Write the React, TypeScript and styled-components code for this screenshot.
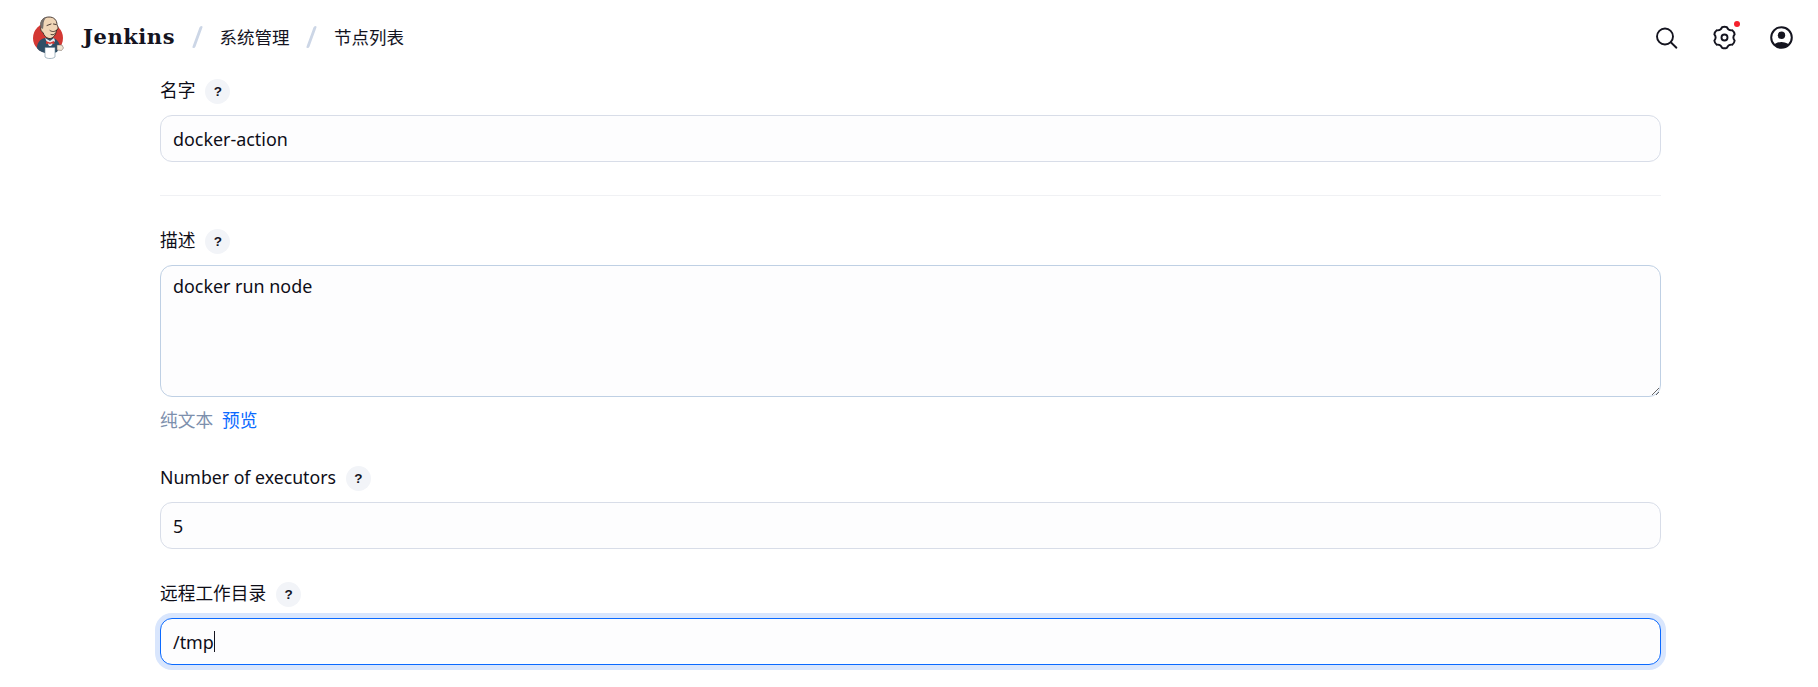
import React from "react";
import styled, { createGlobalStyle } from "styled-components";

const Global = createGlobalStyle`
  html, body { margin: 0; padding: 0; background: #fff; overflow: hidden; }
  body { font-family: "Noto Sans", "Noto Sans CJK SC", sans-serif; color: #14141f; }
`;

const Page = styled.div`
  width: 1818px;
  height: 687px;
  overflow: hidden;
`;

const Header = styled.header`
  height: 79px;
  display: flex;
  align-items: center;
  justify-content: space-between;
  padding: 0 24px 5px 32px;
  box-sizing: border-box;
`;

const Breadcrumbs = styled.nav`
  display: flex;
  align-items: center;
`;

const LogoLink = styled.a`
  display: flex;
  align-items: center;
  gap: 19px;
`;

const Brand = styled.span`
  margin-top: -2px;
  font-family: "DejaVu Serif", "Liberation Serif", serif;
  font-weight: 700;
  font-size: 21px;
  letter-spacing: 0.55px;
  color: #14141f;
`;

const Slash = styled.span`
  width: 2.5px;
  height: 22px;
  margin: 0 21.5px 0 20.5px;
  border-radius: 2px;
  background: #ccd6e6;
  transform: skewX(-20deg);
`;

const Crumb = styled.span`
  margin-top: -2px;
  font-family: "Noto Sans CJK SC", sans-serif;
  font-size: 17.5px;
  color: #14141f;
`;

const Actions = styled.div`
  display: flex;
  align-items: center;
  gap: 32px;
`;

const ActionIcon = styled.span<{ $nudge?: number }>`
  position: relative;
  width: 25px;
  height: 25px;
  margin-right: ${(p) => p.$nudge ?? 0}px;
  display: flex;
  align-items: center;
  justify-content: center;
  color: #14141f;
`;

const Dot = styled.span`
  position: absolute;
  top: -4px;
  right: -3px;
  width: 6px;
  height: 6px;
  border-radius: 50%;
  background: #f5222d;
`;

const Form = styled.main`
  width: 1501px;
  margin-left: 160px;
  display: flex;
  flex-direction: column;
`;

const Field = styled.div<{ $gap?: number }>`
  margin-bottom: ${(p) => p.$gap ?? 0}px;
`;

const LabelRow = styled.div`
  display: flex;
  align-items: center;
  gap: 10px;
  height: 25px;
  margin-bottom: 11px;
`;

const Label = styled.label`
  font-size: 17.7px;
  line-height: 25px;
  margin-top: -2px;
  font-family: "Noto Sans", "Noto Sans CJK SC", sans-serif;
  color: #0e0e18;
`;

const Help = styled.span`
  width: 25px;
  height: 25px;
  border-radius: 50%;
  background: #f2f4f8;
  display: flex;
  align-items: center;
  justify-content: center;
  font-family: "Liberation Sans", sans-serif;
  font-weight: 700;
  font-size: 13.5px;
  color: #14141f;
`;

const TextInput = styled.input`
  display: block;
  width: 100%;
  height: 47px;
  box-sizing: border-box;
  padding: 0 12px;
  border: 1.5px solid #d8dde8;
  border-radius: 12px;
  background: #fdfdfe;
  font: 17.9px "Noto Sans", sans-serif;
  color: #0e0e18;
  outline: none;
`;

const TextArea = styled.textarea`
  display: block;
  width: 100%;
  height: 132px;
  box-sizing: border-box;
  padding: 8px 12px;
  border: 1.5px solid #bfd0e4;
  border-radius: 12px;
  background: #fdfdfe;
  font: 17.9px "Noto Sans", sans-serif;
  color: #0e0e18;
  outline: none;
  resize: vertical;
`;

const FocusedInput = styled.div`
  display: flex;
  align-items: center;
  height: 47px;
  box-sizing: border-box;
  padding: 0 12px;
  border: 1.5px solid #0b6aff;
  border-radius: 12px;
  background: #fdfdfe;
  box-shadow: 0 0 0 5px #d9e6fd;
  font-size: 17.9px;
  color: #0e0e18;
`;

const Caret = styled.span`
  width: 1px;
  height: 21px;
  margin-left: 0;
  background: #14141f;
`;

const Divider = styled.hr`
  border: 0;
  height: 1px;
  background: #f0f1f4;
  margin: 33px 0 33px;
`;

const EditorTabs = styled.div`
  display: flex;
  gap: 9px;
  margin-top: 9px;
  font-family: "Noto Sans CJK SC", sans-serif;
  font-size: 17.7px;
  line-height: 26px;
`;

const EditorTab = styled.a<{ $active?: boolean }>`
  color: ${(p) => (p.$active ? "#0b6aff" : "#7d90ad")};
`;

const JenkinsLogo = () => (
  <svg width="32" height="46" viewBox="0 0 32 46" aria-hidden="true">
    <circle cx="16" cy="24" r="15" fill="#d33833" />
    <path d="M5 34c0-5 3-9 8-10h8c4 1 6 4 7 8l-3 6-3 1v-5H13v5l-3-1c-2-1-4-2-5-4z" fill="#2f4f66" />
    <path d="M13 24l5 3 4-3 1 3-4 5h-2z" fill="#e9eef2" />
    <path d="M14 27l4 1.500 4-1.500 .5 3-3.500-.5-1 1-1-1-3 .5z" fill="#d33833" />
    <path d="M9 12C8 6 12 3 17 3c5 0 8 3 8 8 1 1 1.500 3 .5 4.500l-1 .5c-.5 5-3.500 9-7.500 8.500-3-.5-5-3-6-6-2-.5-3-4-2-6z" fill="#f0d6b7" stroke="#3a2a24" strokeWidth="0.9" />
    <path d="M9 14C7 8 10 4 15 3c-3 2-3.500 5-3.500 8l-.5 4z" fill="#77706c" />
    <path d="M15 11.500l4-1.500M21.500 10l2.500.5M18 16.500c2 1.500 4.500 1.500 7-.5M19 20.500c1.500.5 3 .5 4-1" fill="none" stroke="#3a2a24" strokeWidth="0.9" strokeLinecap="round" />
    <path d="M13 33.500h10V43c-2 2-8 2-10 0z" fill="#fff" stroke="#6f8a9a" strokeWidth="0.6" />
    <path d="M25 31l5 0 1.500 3-2 2.500-4.500-.5z" fill="#f0e4d2" stroke="#6b5b50" strokeWidth="0.5" />
  </svg>
);

const SearchIcon = () => (
  <svg width="25" height="25" viewBox="0 0 25 25" fill="none" stroke="currentColor" strokeWidth="1.9" strokeLinecap="round" aria-hidden="true">
    <circle cx="11" cy="11.500" r="8" />
    <path d="M16.800 17.300L22.400 22.700" />
  </svg>
);

const gearPath = (() => {
  const pt = (r: number, deg: number) => {
    const t = (deg * Math.PI) / 180;
    return `${(12.5 + r * Math.cos(t)).toFixed(2)} ${(12.5 + r * Math.sin(t)).toFixed(2)}`;
  };
  let d = "";
  for (let i = 0; i < 6; i++) {
    const a = -90 + 60 * i;
    d += `${i === 0 ? "M" : "L"}${pt(10.6, a - 13)} Q${pt(11.3, a)} ${pt(10.6, a + 13)} Q${pt(7.6, a + 30)} ${pt(10.6, a + 47)} `;
  }
  return d + "Z";
})();

const GearIcon = () => (
  <svg width="25" height="25" viewBox="0 0 25 25" fill="none" stroke="currentColor" strokeWidth="1.9" strokeLinejoin="round" aria-hidden="true">
    <path d={gearPath} />
    <circle cx="12.500" cy="12.500" r="3" />
  </svg>
);

const UserIcon = () => (
  <svg width="25" height="25" viewBox="0 0 25 25" aria-hidden="true">
    <defs>
      <clipPath id="userClip">
        <circle cx="12.500" cy="12.500" r="10.500" />
      </clipPath>
    </defs>
    <circle cx="12.500" cy="10.200" r="3.700" fill="#14141f" />
    <ellipse cx="12.500" cy="22.500" rx="8.500" ry="5.500" fill="#14141f" clipPath="url(#userClip)" />
    <circle cx="12.500" cy="12.500" r="10.300" fill="none" stroke="#14141f" strokeWidth="2" />
  </svg>
);

export default function App() {
  return (
    <Page>
      <Global />
      <Header>
        <Breadcrumbs>
          <LogoLink>
            <JenkinsLogo />
            <Brand>Jenkins</Brand>
          </LogoLink>
          <Slash />
          <Crumb>系统管理</Crumb>
          <Slash />
          <Crumb>节点列表</Crumb>
        </Breadcrumbs>
        <Actions>
          <ActionIcon $nudge={1}>
            <SearchIcon />
          </ActionIcon>
          <ActionIcon>
            <GearIcon />
            <Dot />
          </ActionIcon>
          <ActionIcon>
            <UserIcon />
          </ActionIcon>
        </Actions>
      </Header>
      <Form>
        <Field>
          <LabelRow>
            <Label>名字</Label>
            <Help>?</Help>
          </LabelRow>
          <TextInput defaultValue="docker-action" />
        </Field>
        <Divider />
        <Field $gap={34}>
          <LabelRow>
            <Label>描述</Label>
            <Help>?</Help>
          </LabelRow>
          <TextArea defaultValue="docker run node" />
          <EditorTabs>
            <EditorTab>纯文本</EditorTab>
            <EditorTab $active>预览</EditorTab>
          </EditorTabs>
        </Field>
        <Field $gap={33}>
          <LabelRow>
            <Label>Number of executors</Label>
            <Help>?</Help>
          </LabelRow>
          <TextInput defaultValue="5" />
        </Field>
        <Field>
          <LabelRow>
            <Label>远程工作目录</Label>
            <Help>?</Help>
          </LabelRow>
          <FocusedInput>
            /tmp
            <Caret />
          </FocusedInput>
        </Field>
      </Form>
    </Page>
  );
}
